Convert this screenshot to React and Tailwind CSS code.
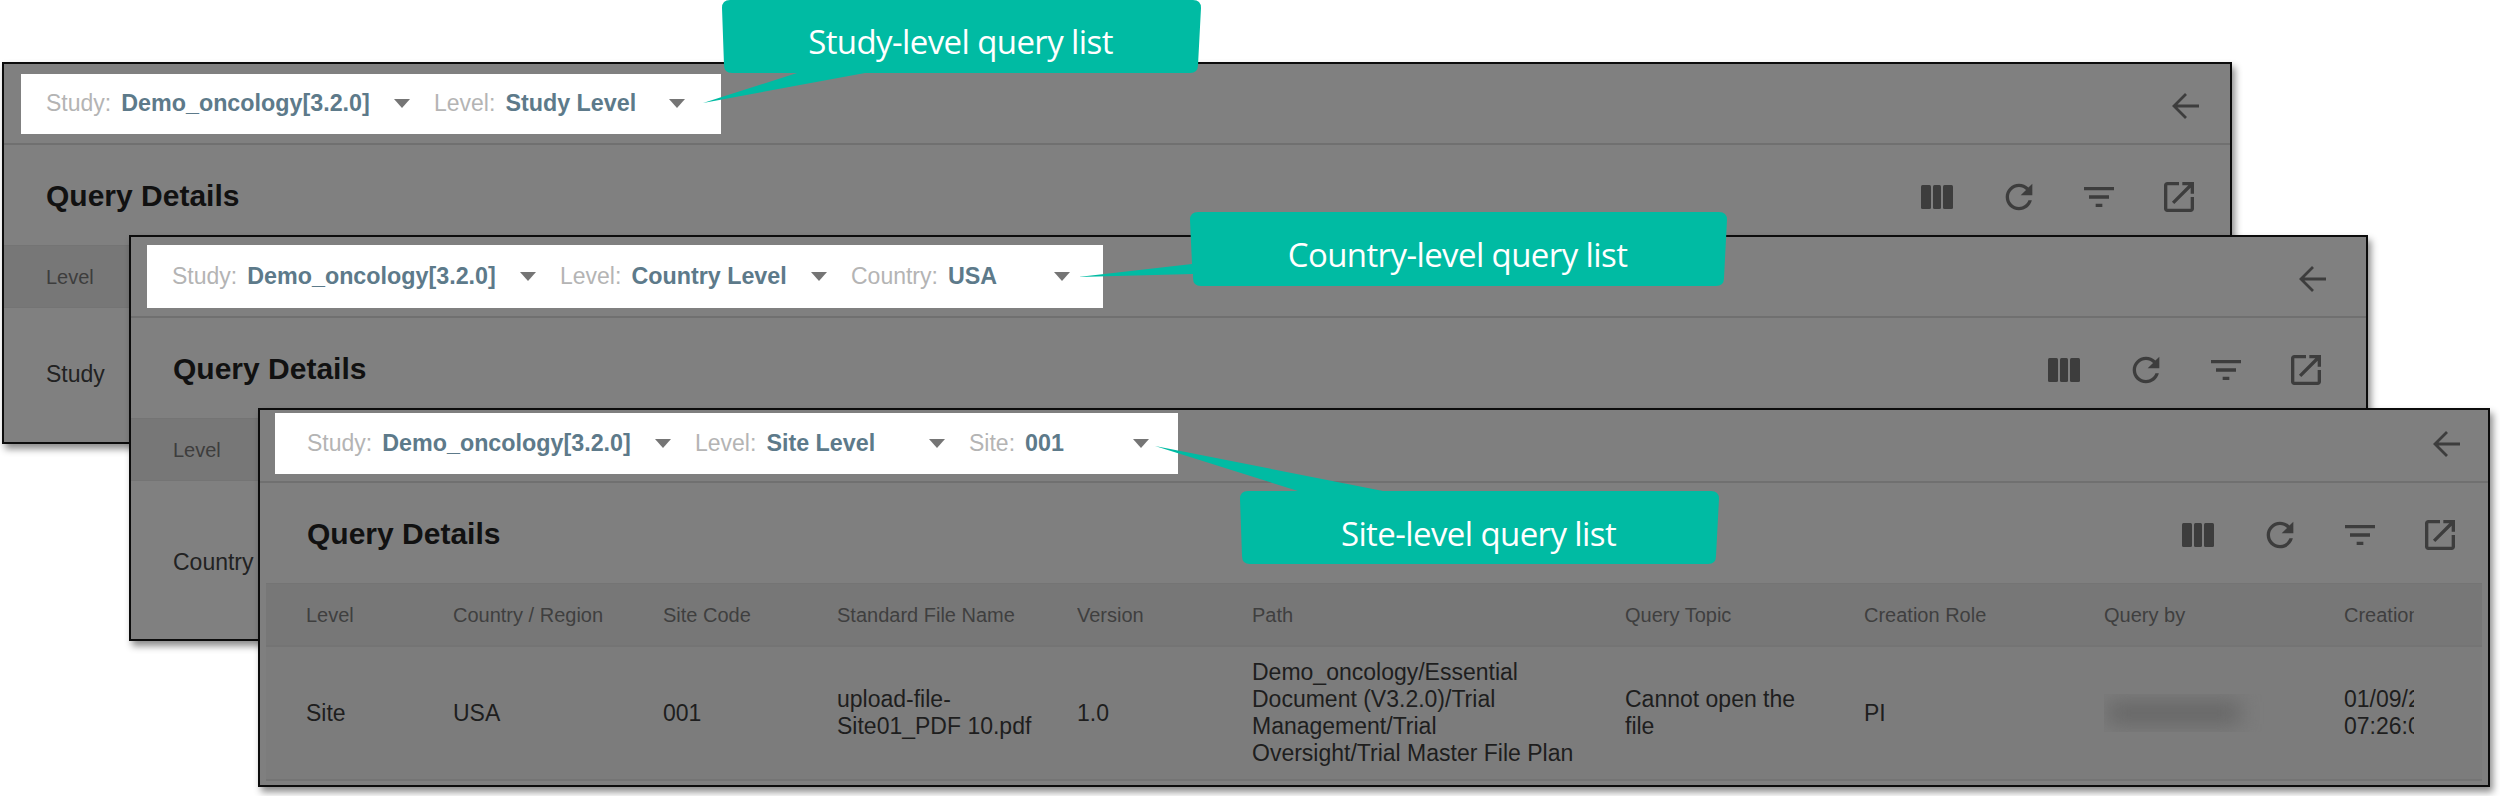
const FONT = "font-['Liberation_Sans',Arial,sans-serif]";

const panels = [
  {
    id: 'study',
    frame: 'left-[2px] top-[62px] w-[2230px] h-[382px] z-10',
    header: 'h-[81px] pr-[31px]',
    padding: 'pl-[42px] pr-[31px]',
    filterBox: 'ml-[17px] h-[60px] w-[700px] pl-[25px]',
    rowHeight: 'h-[134px]',
    rowLabel: 'Study',
    filters: [
      { label: 'Study', value: 'Demo_oncology[3.2.0]', width: 'w-[364px]' },
      { label: 'Level', value: 'Study Level', width: 'w-[251px]' },
    ],
  },
  {
    id: 'country',
    frame: 'left-[129px] top-[235px] w-[2239px] h-[406px] z-20',
    header: 'h-[81px] pr-[40px]',
    padding: 'pl-[42px] pr-[40px]',
    filterBox: 'ml-[16px] h-[63px] w-[956px] pl-[25px]',
    rowHeight: 'h-[164px]',
    rowLabel: 'Country',
    filters: [
      { label: 'Study', value: 'Demo_oncology[3.2.0]', width: 'w-[364px]' },
      { label: 'Level', value: 'Country Level', width: 'w-[267px]' },
      { label: 'Country', value: 'USA', width: 'w-[219px]' },
    ],
  },
]

const columns = [
  { title: 'Level', cell: 'Site' },
  { title: 'Country / Region', cell: 'USA' },
  { title: 'Site Code', cell: '001' },
  { title: 'Standard File Name', cell: <>upload-file-<br />Site01_PDF 10.pdf</> },
  { title: 'Version', cell: '1.0' },
  { title: 'Path', cell: <>Demo_oncology/Essential<br />Document (V3.2.0)/Trial<br />Management/Trial<br />Oversight/Trial Master File Plan</> },
  { title: 'Query Topic', cell: <>Cannot open the<br />file</> },
  { title: 'Creation Role', cell: 'PI' },
  { title: 'Query by', cell: <div className="ml-[4px] h-[22px] w-[132px] bg-[#666666] blur-[10px]" /> },
  { title: 'Creation Time', cell: <>01/09/2024<br />07:26:00</> },
]

function Filter({ label, value, width }) {
  return (
    <div className={`flex items-center justify-between ${width}`}>
      <div className="flex items-center gap-[10px] whitespace-nowrap leading-none">
        <span className="text-[23px] text-[#b4b4b4]">{label}:</span>
        <span className="text-[23.3px] font-bold text-[#5d7a8a]">{value}</span>
      </div>
      <span className="h-0 w-0 border-x-[8px] border-t-[9px] border-x-transparent border-t-[#757575]" />
    </div>
  )
}

function ToolIcon({ children }) {
  return (
    <svg viewBox="0 0 24 24" className="h-10 w-10 fill-[#3d3d3d]">
      {children}
    </svg>
  )
}

function Toolbar() {
  return (
    <div className="flex items-center gap-[40px]">
      <svg viewBox="0 0 32 24" className="mr-[6px] h-6 w-8 fill-[#3d3d3d]">
        <rect x="0" width="10" height="24" rx="1.5" />
        <rect x="12" width="8" height="24" rx="1.5" />
        <rect x="22" width="10" height="24" rx="1.5" />
      </svg>
      <ToolIcon>
        <path d="M17.65 6.35C16.2 4.9 14.21 4 12 4c-4.42 0-7.99 3.58-7.99 8s3.57 8 7.99 8c3.73 0 6.84-2.55 7.73-6h-2.08c-.82 2.33-3.04 4-5.65 4-3.31 0-6-2.69-6-6s2.69-6 6-6c1.66 0 3.14.69 4.22 1.78L13 11h7V4l-2.35 2.35z" />
      </ToolIcon>
      <ToolIcon>
        <path d="M10 18h4v-2h-4v2zM3 6v2h18V6H3zm3 7h12v-2H6v2z" />
      </ToolIcon>
      <ToolIcon>
        <path d="M19 19H5V5h7V3H5c-1.11 0-2 .9-2 2v14c0 1.1.89 2 2 2h14c1.1 0 2-.9 2-2v-7h-2v7zM14 3v2h3.59l-9.83 9.83 1.41 1.41L19 6.41V10h2V3h-7z" />
      </ToolIcon>
    </div>
  )
}

function BackArrow({ className }) {
  return (
    <svg viewBox="0 0 27 26" className={`h-[26px] w-[27px] fill-none stroke-[#3d3d3d] stroke-[2.8] ${className}`}>
      <path d="M27 13H2M14 1 2 13l12 12" />
    </svg>
  )
}

function Header({ filters, header, filterBox, arrow = 'mt-[5px]' }) {
  return (
    <div className={`flex items-center justify-between border-b-2 border-[#707070] ${header}`}>
      <div className={`flex items-center gap-[24px] bg-white ${filterBox}`}>
        {filters.map((f) => <Filter key={f.label} {...f} />)}
      </div>
      <BackArrow className={arrow} />
    </div>
  )
}

function TitleRow() {
  return (
    <div className="flex h-[100px] items-center justify-between">
      <h2 className="text-[30px] font-bold text-[#111]">Query Details</h2>
      <div className="mt-[4px]"><Toolbar /></div>
    </div>
  )
}

function Panel({ frame, header, padding, filterBox, filters, rowHeight, rowLabel }) {
  return (
    <section className={`absolute overflow-hidden border-2 border-[#0c0c0c] bg-[#808080] shadow-[3px_5px_7px_rgba(0,0,0,0.45)] ${frame}`}>
      <Header filters={filters} header={header} filterBox={filterBox} />
      <div className={padding}>
        <TitleRow />
      </div>
      <div className="flex h-[62px] items-center border-t border-[#747474] bg-[#777777] pl-[42px] text-[20px] text-[#3d3d3d]">Level</div>
      <div className={`flex items-center border-t border-[#747474] pl-[42px] text-[23px] text-[#222] ${rowHeight}`}>{rowLabel}</div>
    </section>
  )
}

function SitePanel() {
  return (
    <section className="absolute left-[258px] top-[408px] z-30 h-[379px] w-[2232px] overflow-hidden border-2 border-[#0c0c0c] bg-[#7f7f7f] shadow-[3px_5px_7px_rgba(0,0,0,0.45)]">
      <Header
        header="h-[73px] pr-[28px]"
        filterBox="ml-[15px] -mt-[4px] h-[61px] w-[903px] pl-[32px]"
        arrow="-mt-[3px]"
        filters={[
          { label: 'Study', value: 'Demo_oncology[3.2.0]', width: 'w-[364px]' },
          { label: 'Level', value: 'Site Level', width: 'w-[250px]' },
          { label: 'Site', value: '001', width: 'w-[180px]' },
        ]}
      />
      <div className="mx-[6px]">
        <div className="pl-[41px] pr-[22px]">
          <TitleRow />
        </div>
        <div className="grid h-[62px] grid-cols-[147px_210px_174px_240px_175px_373px_239px_240px_240px_70px] items-center border-t border-[#747474] bg-[#777777] pl-[40px] text-[20px] text-[#3f3f3f]">
          {columns.map((c) => (
            <div key={c.title} className="overflow-hidden whitespace-nowrap">{c.title}</div>
          ))}
        </div>
        <div className="grid h-[136px] grid-cols-[147px_210px_174px_240px_175px_373px_239px_240px_240px_70px] items-center border-y-2 border-[#747474] bg-[#7c7c7c] pl-[40px] text-[23px] leading-[27px] text-[#1e1e1e]">
          {columns.map((c) => (
            <div key={c.title} className="overflow-hidden whitespace-nowrap py-[8px]">{c.cell}</div>
          ))}
        </div>
      </div>
    </section>
  )
}

function Callout({ box, viewBox, shape, text, textBox }) {
  return (
    <div className={`absolute z-40 ${box}`}>
      <svg viewBox={viewBox} className="absolute inset-0 h-full w-full fill-[#00bba3]">
        <path d={shape} />
      </svg>
      <span className={`absolute flex items-center justify-center whitespace-nowrap font-['Open_Sans',sans-serif] text-[33px] tracking-[-0.6px] text-white ${textBox}`}>{text}</span>
    </div>
  )
}

export default function App() {
  return (
    <div className={`relative h-[796px] w-[2500px] overflow-hidden bg-white ${FONT}`}>
      {panels.map((p) => <Panel key={p.id} {...p} />)}
      <SitePanel />

      <Callout
        box="left-[700px] top-0 w-[505px] h-[106px]"
        viewBox="0 0 505 106"
        shape="M30 0H493Q501 0 501 8L498 65Q498 73 490 73H165L3 103 97 73H32Q24 73 24 65L22 8Q22 0 30 0Z"
        text="Study-level query list"
        textBox="left-[108px] top-[20px] w-[305px] h-[44px]"
      />
      <Callout
        box="left-[1075px] top-[208px] w-[656px] h-[82px]"
        viewBox="0 0 656 82"
        shape="M123 4H644Q652 4 652 12L649 70Q649 78 641 78H126Q118 78 118 70V66L3 69 117 56 115 12Q115 4 123 4Z"
        text="Country-level query list"
        textBox="left-[211px] top-[25px] w-[343px] h-[44px]"
      />
      <Callout
        box="left-[1152px] top-[443px] w-[571px] h-[125px]"
        viewBox="0 0 571 125"
        shape="M96 48H146L3 3 231 48H559Q567 48 567 56L564 113Q564 121 556 121H98Q90 121 90 113L88 56Q88 48 96 48Z"
        text="Site-level query list"
        textBox="left-[188px] top-[69px] w-[277px] h-[44px]"
      />
    </div>
  )
}
